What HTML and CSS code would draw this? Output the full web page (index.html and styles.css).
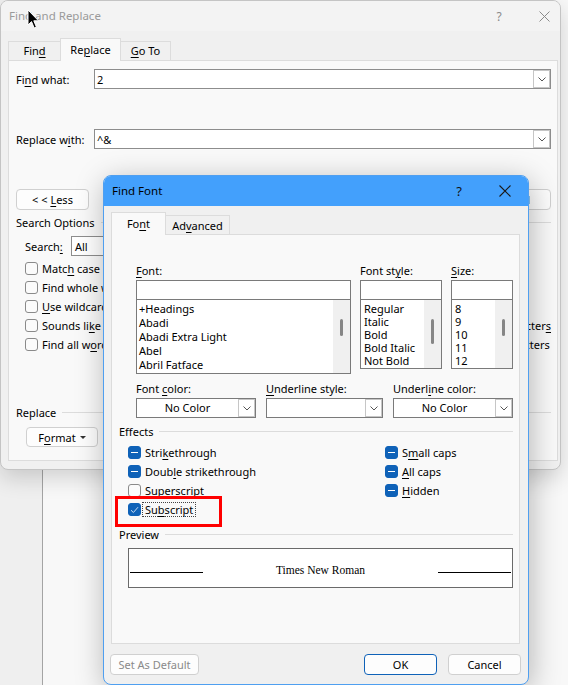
FILE: index.html
```html
<!DOCTYPE html>
<html>
<head>
<meta charset="utf-8">
<title>Find Font</title>
<link rel="stylesheet" href="styles.css">
</head>
<body>
<div class="desk">

  <div class="win fr">
    <div class="fr-title">
      <span class="fr-title-text">Find and Replace</span>
      <div class="fr-ctl">
        <span class="fr-btn">?</span>
        <span class="fr-btn"><svg width="11" height="11" viewBox="0 0 11 11"><path d="M0.5 0.5L10.5 10.5M10.5 0.5L0.5 10.5" stroke="#8a8a8a" stroke-width="1"/></svg></span>
      </div>
    </div>
    <div class="fr-tabs">
      <div class="tab t-find"><span>Fin<u>d</u></span></div>
      <div class="tab t-replace active"><span>Re<u>p</u>lace</span></div>
      <div class="tab t-goto"><span><u>G</u>o To</span></div>
    </div>
    <div class="fr-panel">
      <div class="fr-row">
        <span class="fr-lbl">Fi<u>n</u>d what:</span>
        <div class="combo"><span class="combo-val">2</span><span class="dd"><svg width="8" height="5" viewBox="0 0 8 5"><polyline points="0.5,0.5 4,4 7.5,0.5" fill="none" stroke="#555" stroke-width="1"/></svg></span></div>
      </div>
      <div class="fr-row mt40">
        <span class="fr-lbl">Replace w<u>i</u>th:</span>
        <div class="combo"><span class="combo-val">^&amp;</span><span class="dd"><svg width="8" height="5" viewBox="0 0 8 5"><polyline points="0.5,0.5 4,4 7.5,0.5" fill="none" stroke="#555" stroke-width="1"/></svg></span></div>
      </div>
      <div class="fr-btnrow">
        <div class="btn less"><span>&lt; &lt; <u>L</u>ess</span></div>
        <div class="btngroup">
          <div class="btn"><span>Replace</span></div>
          <div class="btn"><span>Replace <u>A</u>ll</span></div>
          <div class="btn"><span><u>F</u>ind Next</span></div>
          <div class="btn"><span>Cancel</span></div>
        </div>
      </div>
      <div class="grp"><span>Search Options</span><span class="grp-line"></span></div>
      <div class="search-row">
        <span class="search-lbl">Search<u>:</u></span>
        <div class="sel">All</div>
      </div>
      <div class="opts">
        <div class="opt-col">
          <div class="opt"><span class="cb"></span><span>Matc<u>h</u> case</span></div>
          <div class="opt"><span class="cb"></span><span>Find whole words onl<u>y</u></span></div>
          <div class="opt"><span class="cb"></span><span><u>U</u>se wildcards</span></div>
          <div class="opt"><span class="cb"></span><span>Sounds li<u>k</u>e (English)</span></div>
          <div class="opt"><span class="cb"></span><span>Find all w<u>o</u>rd forms (English)</span></div>
        </div>
        <div class="opt-col">
          <div class="opt"><span class="cb"></span><span>Match prefi<u>x</u></span></div>
          <div class="opt"><span class="cb"></span><span>Match suffi<u>t</u></span></div>
          <div class="opt"></div>
          <div class="opt"><span class="cb"></span><span>Ignore punctuation character<u>s</u></span></div>
          <div class="opt"><span class="cb"></span><span>Ignore <u>w</u>hite-space characters</span></div>
        </div>
      </div>
      <div class="grp grp-replace"><span>Replace</span><span class="grp-line"></span></div>
      <div class="fmt-row">
        <div class="btn fmt"><span>F<u>o</u>rmat</span><span class="caret"></span></div>
        <div class="btn fmt"><span>Sp<u>e</u>cial</span><span class="caret"></span></div>
        <div class="btn nofmt"><span>No Formatting</span></div>
      </div>
    </div>
  </div>

  <div class="win ff">
    <div class="ff-title">
      <span class="ff-title-text">Find Font</span>
      <span class="ff-btn q">?</span>
      <span class="ff-btn"><svg width="12" height="12" viewBox="0 0 12 12"><path d="M0.5 0.5L11.5 11.5M11.5 0.5L0.5 11.5" stroke="#1a1a1a" stroke-width="1.1"/></svg></span>
    </div>
    <div class="ff-tabs">
      <div class="tab f-font active"><span>Fo<u>n</u>t</span></div>
      <div class="tab f-adv"><span>Ad<u>v</u>anced</span></div>
    </div>
    <div class="ff-panel">
      <div class="fgrid">
        <div class="fcol">
          <div class="flbl"><u>F</u>ont:</div>
          <div class="finput"></div>
          <div class="flist l1">
            <div class="items i1">
              <div>+Headings</div>
              <div>Abadi</div>
              <div>Abadi Extra Light</div>
              <div>Abel</div>
              <div>Abril Fatface</div>
            </div>
            <div class="sb"><span class="thumb th17"></span></div>
          </div>
        </div>
        <div class="fcol">
          <div class="flbl">Font st<u>y</u>le:</div>
          <div class="finput"></div>
          <div class="flist l2">
            <div class="items i2">
              <div>Regular</div>
              <div>Italic</div>
              <div>Bold</div>
              <div>Bold Italic</div>
              <div>Not Bold</div>
            </div>
            <div class="sb"><span class="thumb th25"></span></div>
          </div>
        </div>
        <div class="fcol">
          <div class="flbl"><u>S</u>ize:</div>
          <div class="finput"></div>
          <div class="flist l2">
            <div class="items i2">
              <div>8</div>
              <div>9</div>
              <div>10</div>
              <div>11</div>
              <div>12</div>
            </div>
            <div class="sb"><span class="thumb th17"></span></div>
          </div>
        </div>
      </div>

      <div class="fgrid2">
        <div class="fcol">
          <div class="flbl">Font <u>c</u>olor:</div>
          <div class="fsel"><span class="fsel-val">No Color</span><span class="dd"><svg width="8" height="5" viewBox="0 0 8 5"><polyline points="0.5,0.5 4,4 7.5,0.5" fill="none" stroke="#555" stroke-width="1"/></svg></span></div>
        </div>
        <div class="fcol">
          <div class="flbl"><u>U</u>nderline style:</div>
          <div class="fsel"><span class="fsel-val"></span><span class="dd"><svg width="8" height="5" viewBox="0 0 8 5"><polyline points="0.5,0.5 4,4 7.5,0.5" fill="none" stroke="#555" stroke-width="1"/></svg></span></div>
        </div>
        <div class="fcol">
          <div class="flbl">Underl<u>i</u>ne color:</div>
          <div class="fsel"><span class="fsel-val">No Color</span><span class="dd"><svg width="8" height="5" viewBox="0 0 8 5"><polyline points="0.5,0.5 4,4 7.5,0.5" fill="none" stroke="#555" stroke-width="1"/></svg></span></div>
        </div>
      </div>

      <div class="grp fgrp"><span>Effects</span><span class="grp-line"></span></div>
      <div class="effects">
        <div class="eff-col">
          <div class="opt"><span class="cb ind"><span class="dash"></span></span><span>Stri<u>k</u>ethrough</span></div>
          <div class="opt"><span class="cb ind"><span class="dash"></span></span><span>Doub<u>l</u>e strikethrough</span></div>
          <div class="opt"><span class="cb"></span><span>Superscript</span></div>
          <div class="opt"><span class="cb chk"><svg width="9" height="8" viewBox="0 0 9 8"><polyline points="1,4.2 3.4,6.5 8,1.2" fill="none" stroke="#c9dcf2" stroke-width="1"/></svg></span><span class="focus">Su<u>b</u>script</span></div>
        </div>
        <div class="eff-col">
          <div class="opt"><span class="cb ind"><span class="dash"></span></span><span>S<u>m</u>all caps</span></div>
          <div class="opt"><span class="cb ind"><span class="dash"></span></span><span><u>A</u>ll caps</span></div>
          <div class="opt"><span class="cb ind"><span class="dash"></span></span><span><u>H</u>idden</span></div>
        </div>
      </div>

      <div class="grp fgrp pvgrp"><span>Preview</span><span class="grp-line"></span></div>
      <div class="pv">
        <span class="pv-line"></span>
        <span class="pv-text">Times New Roman</span>
        <span class="pv-line"></span>
      </div>
    </div>
    <div class="ff-btns">
      <div class="btn dis setdef"><span>Set As Default</span></div>
      <div class="spacer"></div>
      <div class="btn ok"><span>OK</span></div>
      <div class="btn cancel"><span>Cancel</span></div>
    </div>
  </div>

  <div class="annot"></div>

  <svg class="cursor" width="13" height="21" viewBox="0 0 13 21"><path d="M1 1 L1 16 L4.5 12.6 L7.2 19 L9.4 18 L6.8 11.8 L11.5 11.8 Z" fill="#000" stroke="#fff" stroke-width="1" stroke-linejoin="round"/></svg>
</div>
</body>
</html>
```

FILE: styles.css
```css
* { box-sizing: border-box; margin: 0; padding: 0; }
html, body { width: 568px; height: 685px; overflow: hidden; }
body {
  font-family: "Noto Sans", "Open Sans", sans-serif;
  font-size: 11px;
  color: #000;
  background: #f6f6f6;
}
u { text-decoration: underline; text-decoration-thickness: 1px; text-underline-offset: 2px; }

.desk {
  position: relative;
  width: 568px;
  height: 685px;
  overflow: hidden;
  background: linear-gradient(to right, #efefef 0, #efefef 42px, #a4a4a4 42px, #a4a4a4 43px, #f8f8f8 43px);
}

.win { position: absolute; border-radius: 8px; overflow: hidden; }

/* ---------- Find and Replace (background window) ---------- */
.fr {
  left: 0; top: 0; width: 561px; height: 470px;
  background: #f0f0f0;
  border: 1px solid #c4c4c4;
  box-shadow: 0 8px 22px rgba(0,0,0,.16);
}
.fr-title {
  height: 30px; background: #f3f3f3;
  display: flex; align-items: center; padding-left: 8px;
}
.fr-title-text { flex: 1; font-size: 11.5px; color: #9a9a9a; margin-top: -1px; }
.fr-ctl { display: flex; gap: 13px; height: 100%; }
.fr-btn {
  width: 32px; display: flex; align-items: center; justify-content: center;
  color: #8a8a8a; font-size: 12px;
}

.fr-tabs, .ff-tabs {
  display: flex; align-items: flex-end; padding-left: 7px;
  position: relative; z-index: 1;
}
.fr-tabs { height: 29px; }
.ff-tabs { height: 28px; }
.tab {
  height: 19px; border: 1px solid #dcdcdc; border-bottom: none;
  background: #f0f0f0;
  display: flex; align-items: center; justify-content: center;
}
.tab.active {
  background: #f9f9f9; height: 23px; margin-bottom: -1px;
  position: relative; z-index: 2; padding-bottom: 2px;
}
.t-find { width: 53px; padding-bottom: 2px; }
.t-replace { width: 61px; margin-left: -1px; }
.t-goto { width: 51px; margin-left: -1px; padding-bottom: 2px; }
.f-font { width: 55px; height: 22px; }
.f-adv { width: 65px; margin-left: -1px; }

.fr-panel {
  margin: 0 2px 0 7px; height: 401px;
  border: 1px solid #dcdcdc; background: #f9f9f9;
  padding: 8px 6px 0 7px;
}
.fr-row { display: flex; align-items: center; height: 20px; }
.fr-lbl { width: 78px; flex: none; }
.mt40 { margin-top: 40px; }

.combo {
  flex: 1; height: 20px; border: 1px solid #8d8d8d; background: #fff;
  display: flex; align-items: center;
}
.combo-val { flex: 1; padding-left: 2px; }
.dd {
  width: 17px; height: 18px; flex: none;
  border: 1px solid #c6c6c6; background: #fff;
  display: flex; align-items: center; justify-content: center;
}

.btn {
  height: 21px; border: 1px solid #d0d0d0; border-radius: 4px; background: #fdfdfd;
  display: flex; align-items: center; justify-content: center; flex: none;
  white-space: pre;
}
.fr-btnrow { display: flex; justify-content: space-between; margin-top: 40px; height: 21px; }
.less { width: 73px; }
.btngroup { display: flex; gap: 8px; }
.btngroup .btn { width: 76px; }

.grp { display: flex; align-items: center; height: 16px; margin-top: 4px; }
.grp-line { flex: 1; height: 1px; background: #dcdcdc; margin-left: 6px; }
.grp.grp-replace { margin-top: 50px; }

.search-row { display: flex; align-items: center; height: 20px; margin-top: 6px; padding-left: 9px; }
.search-lbl { width: 46px; flex: none; }
.sel {
  width: 140px; height: 20px; border: 1px solid #8d8d8d; background: #fff;
  padding-left: 3px; display: flex; align-items: center;
}

.opts { display: flex; justify-content: space-between; margin-top: 3px; padding-left: 9px; }
.opt { display: flex; align-items: center; height: 19px; gap: 4px; white-space: nowrap; }
.cb {
  width: 13px; height: 13px; flex: none;
  border: 1px solid #8a8a8a; border-radius: 3px; background: #fbfbfb;
  display: flex; align-items: center; justify-content: center;
}
.cb.ind, .cb.chk { background: #0f62b8; border-color: #0f62b8; }
.dash { width: 7px; height: 1.5px; background: #fff; }

.fmt-row { display: flex; gap: 8px; margin-top: 7px; padding-left: 10px; }
.fmt-row .btn { height: 20px; }
.fmt { width: 72px; }
.nofmt { width: 90px; }
.caret {
  display: inline-block; margin-left: 4px; margin-top: 1px;
  border-left: 3px solid transparent; border-right: 3px solid transparent;
  border-top: 3px solid #333;
}

/* ---------- Find Font (front window) ---------- */
.ff {
  left: 103px; top: 175px; width: 426px; height: 510px;
  background: #f0f0f0;
  border: 1px solid #4f9ff0;
  box-shadow: 2px 6px 30px rgba(0,0,0,.28);
}
.ff-title {
  height: 30px; background: #43a0fc;
  display: flex; align-items: center; padding-left: 8px;
}
.ff-title-text { flex: 1; font-size: 11.5px; margin-top: -1px; }
.ff-btn {
  width: 46px; height: 30px; display: flex; align-items: center; justify-content: center;
}
.ff-btn.q { font-size: 13px; color: #111; }

.ff-panel {
  margin-left: 7px; width: 409px; height: 410px;
  border: 1px solid #dcdcdc; background: #f9f9f9;
  padding: 28px 6px 0 7px;
}
.fgrid {
  display: grid; grid-template-columns: 215px 82px 62px; column-gap: 9px;
  margin-left: 17px;
}
.flbl { height: 17px; line-height: 16px; white-space: nowrap; }
.finput { height: 20px; border: 1px solid #7a7a7a; background: #fff; }
.flist {
  display: flex; border: 1px solid #7a7a7a; background: #fff; margin-top: -1px;
}
.l1 { height: 75px; }
.l2 { height: 70px; }
.items { flex: 1; overflow: hidden; white-space: nowrap; }
.i1 { padding: 2px 0 0 2px; line-height: 14px; }
.i2 { padding: 2px 0 0 3px; line-height: 13px; }
.sb {
  width: 17px; flex: none; background: #f0f0f0;
  display: flex; justify-content: center; align-items: flex-start; padding-top: 19px;
}
.thumb { width: 3px; background: #868686; border-radius: 1.5px; }
.th17 { height: 17px; }
.th25 { height: 25px; }

.fgrid2 {
  display: grid; grid-template-columns: 120px 117px 120px; column-gap: 10px;
  margin-left: 17px; margin-top: 7px;
}
.fsel { height: 20px; border: 1px solid #7a7a7a; background: #fff; display: flex; }
.fsel-val { flex: 1; text-align: center; line-height: 18px; }

.grp.fgrp { margin-top: 5px; }
.grp.pvgrp { margin-top: 7px; }

.effects {
  display: grid; grid-template-columns: 257px auto;
  margin-left: 9px; margin-top: 4px;
}
.focus {
  border: 1px dotted #444; padding: 0 2px; margin-left: -3px;
  height: 15px; line-height: 13px;
}

.pv {
  margin: 6px 0 0 9px; width: 385px; height: 40px;
  border: 1px solid #6a6a6a; background: #fff;
  display: flex; align-items: flex-start; padding: 15px 1px 0;
}
.pv-line { width: 73px; height: 0; border-top: 1.5px solid #000; margin-top: 8px; flex: none; }
.pv-text {
  flex: 1; text-align: center;
  font-family: "Liberation Serif", "Times New Roman", serif;
  font-size: 11.5px; line-height: 13px;
}

.ff-btns { display: flex; margin-top: 10px; padding: 0 7px 0 6px; height: 21px; }
.spacer { flex: 1; }
.setdef { width: 89px; color: #8a8a8a; }
.ok { width: 73px; border-color: #0f62b8; }
.cancel { width: 73px; margin-left: 11px; }

/* ---------- overlays ---------- */
.annot {
  position: absolute; left: 115px; top: 496px; width: 107px; height: 31px;
  border: 3px solid #ff0000;
}
.cursor { position: absolute; left: 27px; top: 9px; }
```
